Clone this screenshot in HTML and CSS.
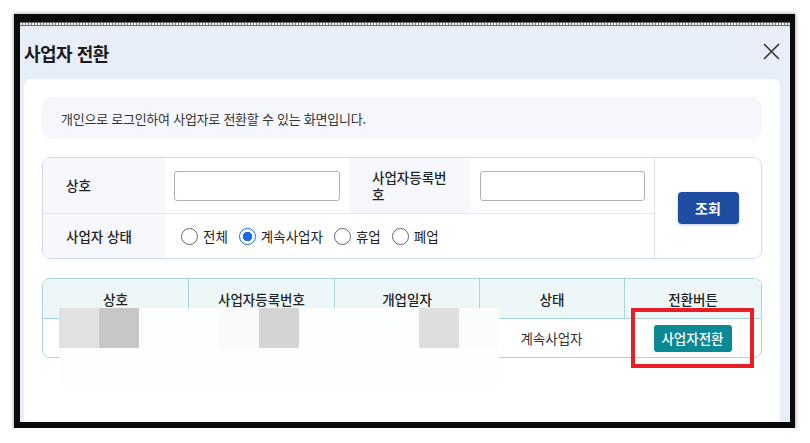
FILE: index.html
```html
<!DOCTYPE html>
<html lang="ko">
<head>
<meta charset="utf-8">
<title>사업자 전환</title>
<link rel="stylesheet" href="styles.css">
</head>
<body>
<div class="frame">
  <div class="frame-strip"></div>
  <div class="dialog">
    <div class="dialog-head">
      <h1 class="dialog-title">사업자 전환</h1>
      <button class="close-btn" type="button" aria-label="닫기">
        <svg width="17" height="17" viewBox="0 0 17 17"><path d="M1 1L16 16M16 1L1 16" stroke="#333" stroke-width="1.6" fill="none"/></svg>
      </button>
    </div>
    <div class="card">
      <p class="notice">개인으로 로그인하여 사업자로 전환할 수 있는 화면입니다.</p>

      <div class="search">
        <div class="s-label">상호</div>
        <div class="s-field"><input class="s-input" type="text"></div>
        <div class="s-label">사업자등록번호</div>
        <div class="s-field"><input class="s-input" type="text"></div>
        <div class="s-action"><button class="btn-search" type="button">조회</button></div>
        <div class="s-label s-last">사업자 상태</div>
        <div class="s-radios s-last">
          <label class="radio"><input type="radio" name="st"><span>전체</span></label>
          <label class="radio"><input type="radio" name="st" checked><span>계속사업자</span></label>
          <label class="radio"><input type="radio" name="st"><span>휴업</span></label>
          <label class="radio"><input type="radio" name="st"><span>폐업</span></label>
        </div>
      </div>

      <div class="result">
        <table class="result-table">
          <colgroup>
            <col class="c-a"><col class="c-b"><col class="c-a"><col class="c-a"><col>
          </colgroup>
          <thead>
            <tr><th>상호</th><th>사업자등록번호</th><th>개업일자</th><th>상태</th><th>전환버튼</th></tr>
          </thead>
          <tbody>
            <tr><td></td><td></td><td></td><td>계속사업자</td><td><button class="btn-switch" type="button">사업자전환</button></td></tr>
          </tbody>
        </table>
        <div class="mosaic">
          <i class="m1"></i><i class="m2"></i><i></i><i></i><i class="m5"></i><i class="m6"></i><i></i><i></i><i></i><i class="m10"></i><i class="m11"></i>
          <i></i><i></i><i></i><i></i><i></i><i></i><i></i><i></i><i></i><i></i><i></i>
        </div>
        <div class="highlight"></div>
      </div>
    </div>
  </div>
</div>
</body>
</html>
```

FILE: styles.css
```css
* { box-sizing: border-box; }

body {
  margin: 0;
  background: #fff;
  font-family: "Noto Sans CJK KR", "Noto Sans", sans-serif;
  color: #222;
}

/* outer black frame */
.frame {
  margin: 14px 0 0 14px;
  width: 781px;
  height: 414px;
  border-style: solid;
  border-color: #0b0b0b;
  border-width: 8px 5px 6px 6px;
  box-shadow: 0 0 3px 1px rgba(0,0,0,.28);
  display: flex;
  flex-direction: column;
}

.frame-strip {
  height: 4px;
  border-top: 1px solid #6c6c6c;
  border-bottom: 1px solid #6c6c6c;
  background: repeating-linear-gradient(90deg, #f2f2f2 0 2px, #7a7a7a 2px 3px);
}

.dialog {
  flex: 1;
  background: #e8eef8;
  padding: 0 10px 0 4px;
  display: flex;
  flex-direction: column;
}

.dialog-head {
  height: 53px;
  display: flex;
  align-items: center;
  justify-content: space-between;
}

.dialog-title {
  margin: 0;
  font-size: 18px;
  font-weight: 700;
  color: #1a1a1a;
  letter-spacing: -0.5px;
}

.close-btn {
  border: 0;
  background: none;
  padding: 0;
  width: 17px;
  height: 17px;
  display: block;
  margin-top: -2px;
}
.close-btn svg { display: block; }

.card {
  flex: 1;
  background: #fff;
  border-radius: 8px 8px 0 0;
  padding: 18px 18px 0 18px;
}

.notice {
  margin: 0;
  height: 42px;
  display: flex;
  align-items: center;
  padding-left: 19px;
  background: #f5f7fc;
  border-radius: 10px;
  font-size: 13px;
  letter-spacing: -0.25px;
  color: #333;
}

/* search form */
.search {
  margin-top: 18px;
  display: grid;
  grid-template-columns: 122px 184px 122px 183px 1fr;
  grid-template-rows: 56px 44px;
  border: 1px solid #cfdcf0;
  border-radius: 8px;
  overflow: hidden;
}

.s-label {
  background: #f6f8fd;
  padding: 0 20px 0 23px;
  display: flex;
  align-items: center;
  font-size: 13.5px;
  font-weight: 500;
  line-height: 17px;
  color: #222;
  border-bottom: 1px solid #dce6f4;
}

.s-field {
  display: flex;
  align-items: center;
  padding: 0 9px;
  border-bottom: 1px solid #dce6f4;
}

.s-input {
  width: 100%;
  height: 30px;
  border: 1px solid #b0b0b0;
  border-radius: 3px;
  background: #fff;
}

.s-last { border-bottom: 0; }

.s-action {
  grid-column: 5;
  grid-row: 1 / span 2;
  border-left: 1px solid #dce6f4;
  display: flex;
  align-items: center;
  justify-content: center;
}

.btn-search {
  width: 61px;
  height: 32px;
  border: 0;
  border-radius: 4px;
  background: #1d4ca1;
  color: #fff;
  font-family: inherit;
  font-size: 14px;
  font-weight: 700;
  box-shadow: 0 1px 3px rgba(29,76,161,.3);
}

.s-radios {
  grid-column: 2 / span 3;
  display: flex;
  align-items: center;
  padding-left: 16px;
  gap: 11px;
}

.radio {
  display: flex;
  align-items: center;
  gap: 5px;
  font-size: 13.5px;
  color: #222;
}

.radio input {
  appearance: none;
  margin: 0;
  width: 17px;
  height: 17px;
  border: 1px solid #666;
  border-radius: 50%;
  background: #fff;
}
.radio input:checked {
  border: 1px solid #1a6ce8;
  background: radial-gradient(circle, #1a6ce8 0 4.5px, #fff 5px);
}

/* results */
.result {
  position: relative;
  margin-top: 19px;
}

.result-table {
  width: 100%;
  table-layout: fixed;
  border-collapse: separate;
  border-spacing: 0;
  border: 1px solid #a9d4da;
  border-radius: 8px;
  font-size: 13.5px;
}
.c-a { width: 145px; }
.c-b { width: 146px; }

.result-table th {
  height: 40px;
  background: #eef7f7;
  font-weight: 500;
  color: #222;
  border-bottom: 1px solid #a9d4da;
}
.result-table th + th { border-left: 1px solid #a9d4da; }
.result-table th:first-child { border-top-left-radius: 7px; }
.result-table th:last-child { border-top-right-radius: 7px; }

.result-table td {
  height: 38px;
  padding: 0;
  text-align: center;
  color: #333;
}

.btn-switch {
  width: 78px;
  height: 27px;
  border: 0;
  border-radius: 3px;
  background: #0b8995;
  color: #fff;
  font-family: inherit;
  font-size: 13.5px;
  font-weight: 500;
}

/* pixelated cover over private values */
.mosaic {
  position: absolute;
  left: 17px;
  top: 30px;
  display: grid;
  grid-template-columns: repeat(11, 40px);
  grid-auto-rows: 40px;
}
.mosaic i { display: block; background: #fdfefe; }
.mosaic .m1 { background: #e0e1e0; }
.mosaic .m2 { background: #c6c7c6; }
.mosaic .m5 { background: #f9fafa; }
.mosaic .m6 { background: #d4d4d4; }
.mosaic .m10 { background: #dededd; }
.mosaic .m11 { background: #fbfcfc; }

.highlight {
  position: absolute;
  left: 589px;
  top: 30px;
  width: 123px;
  height: 60px;
  border: 4px solid #ec1c24;
}
```
